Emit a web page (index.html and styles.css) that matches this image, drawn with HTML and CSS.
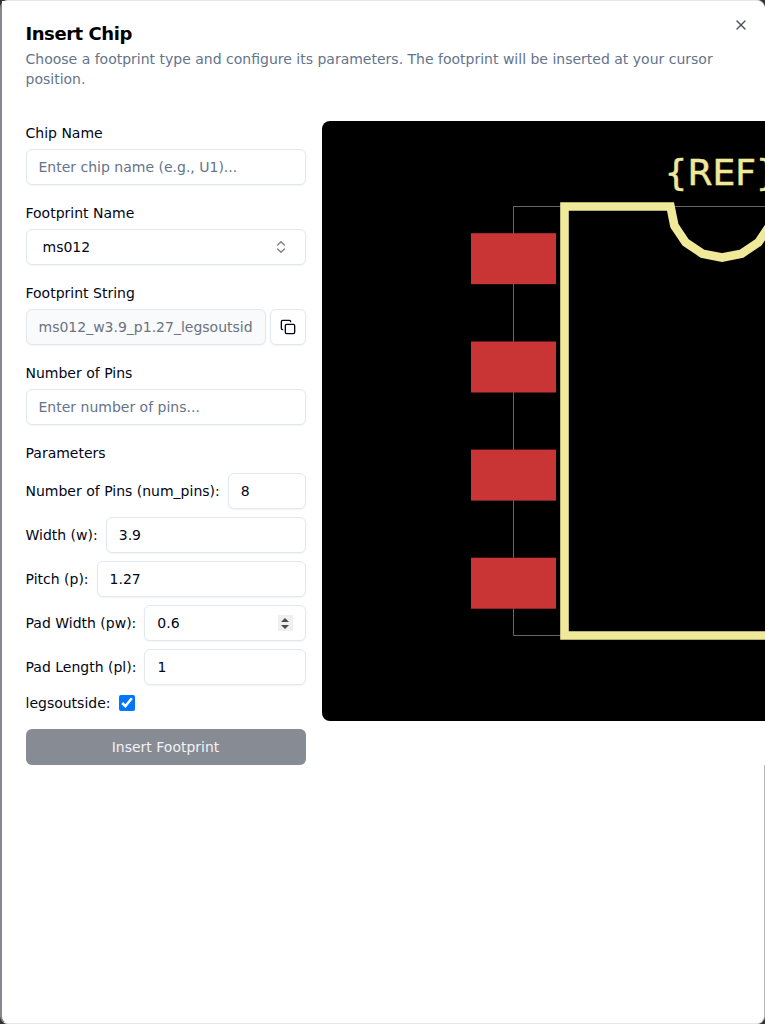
FILE: index.html
```html
<!DOCTYPE html>
<html>
<head>
    <title>Insert Chip</title>
    <link rel="stylesheet" href="styles.css">
</head>
<body>
    <div class="dialog">
        <button class="close-btn" type="button" aria-label="Close">
            <svg width="16" height="16" viewBox="0 0 24 24" fill="none" stroke="currentColor" stroke-width="2" stroke-linecap="round" stroke-linejoin="round"><path d="M18 6 6 18"/><path d="m6 6 12 12"/></svg>
        </button>
        <div class="dialog-header">
            <h2>Insert Chip</h2>
            <p>Choose a footprint type and configure its parameters. The footprint will be inserted at your cursor position.</p>
        </div>
        <div class="dialog-body">
            <form class="chip-form">
                <div class="field">
                    <label for="chip_name">Chip Name</label>
                    <input class="text-input" type="text" id="chip_name" placeholder="Enter chip name (e.g., U1)...">
                </div>
                <div class="field">
                    <label>Footprint Name</label>
                    <button class="select-btn" type="button">
                        <span>ms012</span>
                        <svg width="16" height="16" viewBox="0 0 24 24" fill="none" stroke="currentColor" stroke-width="2" stroke-linecap="round" stroke-linejoin="round"><path d="m7 15 5 5 5-5"/><path d="m7 9 5-5 5 5"/></svg>
                    </button>
                </div>
                <div class="field">
                    <label for="footprint_string">Footprint String</label>
                    <div class="copy-row">
                        <input class="text-input readonly" type="text" id="footprint_string" value="ms012_w3.9_p1.27_legsoutside" readonly>
                        <button class="icon-btn" type="button" aria-label="Copy">
                            <svg width="16" height="16" viewBox="0 0 24 24" fill="none" stroke="currentColor" stroke-width="2" stroke-linecap="round" stroke-linejoin="round"><rect width="14" height="14" x="8" y="8" rx="2" ry="2"/><path d="M4 16c-1.1 0-2-.9-2-2V4c0-1.1.9-2 2-2h10c1.1 0 2 .9 2 2"/></svg>
                        </button>
                    </div>
                </div>
                <div class="field">
                    <label for="pins">Number of Pins</label>
                    <input class="text-input" type="number" id="pins" placeholder="Enter number of pins...">
                </div>
                <div class="params">
                    <div class="params-title">Parameters</div>
                    <div class="param-row">
                        <label for="num_pins">Number of Pins (num_pins):</label>
                        <input class="text-input" type="number" id="num_pins" value="8">
                    </div>
                    <div class="param-row">
                        <label for="w">Width (w):</label>
                        <input class="text-input" type="text" id="w" value="3.9">
                    </div>
                    <div class="param-row">
                        <label for="p">Pitch (p):</label>
                        <input class="text-input" type="text" id="p" value="1.27">
                    </div>
                    <div class="param-row">
                        <label for="pw">Pad Width (pw):</label>
                        <div class="spin-wrap">
                            <input class="text-input" type="number" id="pw" value="0.6" step="0.1">
                            <span class="spinner"><i class="spin-up"></i><i class="spin-down"></i></span>
                        </div>
                    </div>
                    <div class="param-row">
                        <label for="pl">Pad Length (pl):</label>
                        <input class="text-input" type="number" id="pl" value="1">
                    </div>
                    <div class="check-row">
                        <label for="legsoutside">legsoutside:</label>
                        <input type="checkbox" id="legsoutside" checked>
                    </div>
                </div>
                <button class="insert-btn" type="button">Insert Footprint</button>
            </form>
            <div class="preview">
                <svg width="600" height="600" viewBox="322 121 600 600">
                    <path class="fab-line" d="M773 206.5H513.5V635.5H800"/>
                    <rect class="pad" x="471" y="233.2" width="85" height="51"/>
                    <rect class="pad" x="471" y="341.5" width="85" height="51"/>
                    <rect class="pad" x="471" y="449.6" width="85" height="51"/>
                    <rect class="pad" x="471" y="557.7" width="85" height="51"/>
                    <path class="silk" d="M800 635.5H564.5V206.5H670.5L674.4 225.7L685.6 242.4L702.3 253.6L722 257.5L741.7 253.6L758.4 242.4L769.6 225.7L773.5 206.5"/>
                    <text class="ref-text" x="664.5" y="184.5">{REF}</text>
                </svg>
            </div>
        </div>
    </div>
</body>
</html>
```

FILE: styles.css
```css
html, body {
    height: 100%;
}
body {
    margin: 0;
    overflow: hidden;
    background-color: #333;
    font-family: "DejaVu Sans", sans-serif;
    font-size: 14px;
    line-height: 20px;
    color: #020617;
}
.dialog {
    position: relative;
    box-sizing: border-box;
    width: 765px;
    height: 1024px;
    background-color: #fff;
    border-style: solid;
    border-color: #e2e8f0 #b8b8b8 #e2e8f0 #85888e;
    border-width: 1px 1px 1px 2px;
    border-radius: 8px;
}
.dialog-header {
    margin-right: -1px;
    padding: 19px 24px 32px 23.5px;
    background-color: #fff;
    border-top-right-radius: 8px;
}
.dialog-header h2 {
    margin: 0 0 1px;
    font-size: 18px;
    line-height: 28px;
    font-weight: 600;
    letter-spacing: -0.45px;
    color: #000;
}
.dialog-header p {
    margin: 0;
    color: #64748b;
}
.close-btn {
    position: absolute;
    z-index: 1;
    top: 16px;
    right: 15px;
    width: 16px;
    height: 16px;
    padding: 0;
    border: none;
    background: none;
    color: #020617;
    opacity: 0.7;
}
.close-btn svg {
    display: block;
}
.dialog-body {
    display: flex;
    gap: 16px;
    height: 644px;
    margin-right: -1px;
    padding-left: 23.5px;
    background-color: #fff;
}
.chip-form {
    flex: none;
    width: 280px;
    padding-top: 2px;
}
.field {
    margin-bottom: 18px;
}
.field label {
    display: block;
    margin-bottom: 6px;
}
.text-input {
    box-sizing: border-box;
    display: block;
    width: 100%;
    min-width: 0;
    height: 36px;
    padding: 0 12px;
    border: 1px solid #e2e8f0;
    border-radius: 6px;
    background-color: #fff;
    box-shadow: 0 1px 2px rgba(0, 0, 0, 0.05);
    font-family: inherit;
    font-size: 14px;
    color: #020617;
    outline: none;
}
.text-input::placeholder {
    color: #64748b;
    opacity: 1;
}
.text-input[type="number"]::-webkit-inner-spin-button {
    display: none;
}
.readonly {
    background-color: #f8fafc;
    color: #6b7280;
}
.select-btn {
    box-sizing: border-box;
    display: flex;
    align-items: center;
    justify-content: space-between;
    width: 100%;
    height: 36px;
    padding: 0 16px;
    border: 1px solid #e2e8f0;
    border-radius: 6px;
    background-color: #fff;
    box-shadow: 0 1px 2px rgba(0, 0, 0, 0.05);
    font-family: inherit;
    font-size: 14px;
    color: #020617;
}
.select-btn svg {
    opacity: 0.5;
}
.copy-row {
    display: flex;
    gap: 4px;
}
.icon-btn {
    flex: none;
    display: flex;
    align-items: center;
    justify-content: center;
    box-sizing: border-box;
    width: 36px;
    height: 36px;
    padding: 0;
    border: 1px solid #e2e8f0;
    border-radius: 6px;
    background-color: #fff;
    box-shadow: 0 1px 2px rgba(0, 0, 0, 0.05);
    color: #020617;
}
.params-title {
    margin-bottom: 10px;
}
.param-row {
    display: flex;
    align-items: center;
    gap: 8px;
    margin-bottom: 8px;
}
.param-row label {
    flex: none;
}
.spin-wrap {
    position: relative;
    flex: 1;
    min-width: 0;
}
.spinner {
    position: absolute;
    top: 10px;
    right: 13px;
    display: flex;
    flex-direction: column;
    align-items: center;
    justify-content: center;
    gap: 3px;
    width: 15px;
    height: 16px;
    background-color: #efefef;
}
.spin-up, .spin-down {
    width: 0;
    height: 0;
    border-left: 4px solid transparent;
    border-right: 4px solid transparent;
}
.spin-up {
    border-bottom: 4.5px solid #4a4a4a;
}
.spin-down {
    border-top: 4.5px solid #4a4a4a;
}
.check-row {
    display: flex;
    align-items: center;
    gap: 8px;
    height: 20px;
}
.check-row input {
    width: 16px;
    height: 16px;
    margin: 0;
}
.insert-btn {
    display: block;
    width: 100%;
    height: 36px;
    margin-top: 16px;
    border: none;
    border-radius: 6px;
    background-color: #878b94;
    font-family: inherit;
    font-size: 14px;
    color: #f1f3f6;
}
.preview {
    flex: none;
    width: 600px;
    height: 600px;
    border-radius: 8px;
    overflow: hidden;
    background-color: #000;
}
.preview svg {
    display: block;
}
.pad {
    fill: #c93535;
}
.fab-line {
    fill: none;
    stroke: #666;
    stroke-width: 1;
}
.silk {
    fill: none;
    stroke: #f0e999;
    stroke-width: 8.6;
    stroke-linejoin: miter;
}
.ref-text {
    font-family: "DejaVu Sans", sans-serif;
    font-size: 36px;
    fill: #f0e999;
    stroke: #f0e999;
    stroke-width: 0.5;
}
```
